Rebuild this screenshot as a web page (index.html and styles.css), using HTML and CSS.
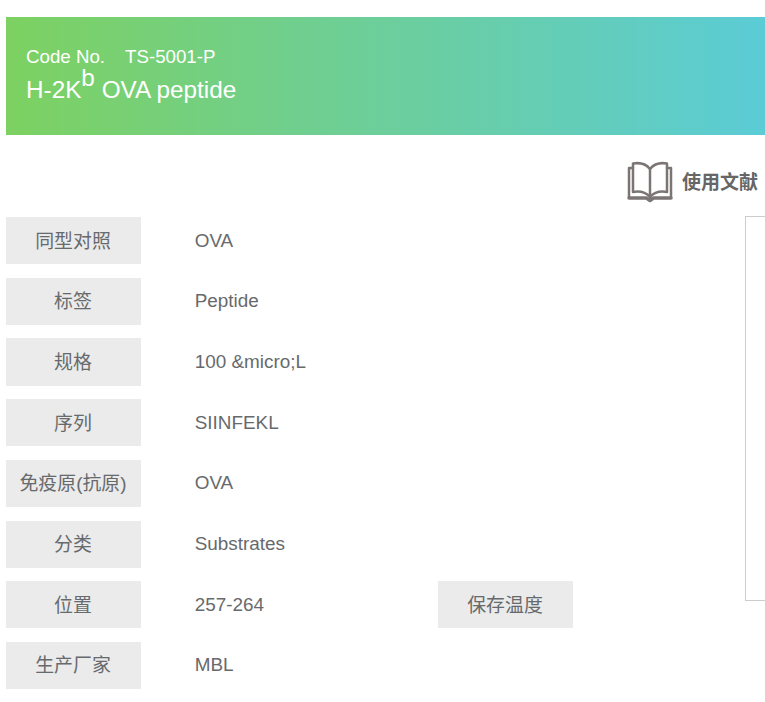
FILE: index.html
```html
<!DOCTYPE html>
<html lang="zh">
<head>
<meta charset="utf-8">
<title>H-2Kb OVA peptide</title>
<link rel="stylesheet" href="styles.css">
</head>
<body>
<header class="banner">
  <div class="code"><span class="code-label">Code No.</span><span>TS-5001-P</span></div>
  <h1 class="title">H-2K<sup class="sup">b</sup> OVA peptide</h1>
</header>
<div class="tools">
  <a class="doc-link" href="#">
    <svg class="book" width="46" height="42" viewBox="0 0 46 42" fill="none" stroke="#7b7674" stroke-linejoin="round" stroke-linecap="round">
      <path d="M23 8C19 3 12 1.500 6 2.500V31C12 30 19 31.500 23 36C27 31.500 34 30 40 31V2.500C34 1.500 27 3 23 8Z" stroke-width="2.500"/>
      <path d="M23 8V36" stroke-width="2.500"/>
      <path d="M6 7H2V36" stroke-width="2.500"/>
      <path d="M40 7H44V36" stroke-width="2.500"/>
      <path d="M2 37H19.500L23 39.500L26.500 37H44" stroke-width="3.500"/>
    </svg>
    <span class="doc-text">使用文献</span>
  </a>
</div>
<main class="content">
  <div class="specs">
    <div class="label">同型对照</div><div class="value wide">OVA</div>
    <div class="label">标签</div><div class="value wide">Peptide</div>
    <div class="label">规格</div><div class="value wide">100 &amp;micro;L</div>
    <div class="label">序列</div><div class="value wide">SIINFEKL</div>
    <div class="label">免疫原(抗原)</div><div class="value wide">OVA</div>
    <div class="label">分类</div><div class="value wide">Substrates</div>
    <div class="label">位置</div><div class="value">257-264</div><div class="label">保存温度</div><div class="value"></div>
    <div class="label">生产厂家</div><div class="value wide">MBL</div>
  </div>
  <aside class="panel"></aside>
</main>
</body>
</html>
```

FILE: styles.css
```css
html, body {
  margin: 0;
  padding: 0;
  background: #fff;
  overflow: hidden;
}

body {
  font-family: "Liberation Sans", "Noto Sans CJK SC", sans-serif;
  color: #676a6c;
  height: 702px;
}

.banner {
  margin: 17px 0 0 6px;
  height: 118px;
  padding: 29px 20px 0;
  box-sizing: border-box;
  background: linear-gradient(90deg, #7dd161, #5bccd6);
  color: #fff;
}

.code {
  font-size: 18.72px;
  line-height: 22px;
}

.code-label {
  margin-right: 20px;
}

.title {
  margin: 8px 0 0;
  font-size: 24.3px;
  font-weight: 400;
  line-height: 28px;
}

.sup {
  font-size: 24.3px;
  line-height: 0;
  vertical-align: 12px;
}

.tools {
  display: flex;
  justify-content: flex-end;
  height: 81px;
  padding: 26px 7px 0 0;
  box-sizing: border-box;
}

.doc-link {
  display: flex;
  align-items: center;
  align-self: flex-start;
  gap: 9px;
  color: #666;
  font-size: 19px;
  font-weight: 700;
  text-decoration: none;
}

.doc-text {
  padding-bottom: 3px;
}

.book {
  display: block;
}

.content {
  display: flex;
  margin-left: 6px;
}

.specs {
  display: grid;
  grid-template-columns: 135px 297px 135px 1fr;
  grid-auto-rows: 47.1px;
  row-gap: 13.62px;
  width: 739px;
  flex: none;
  margin-top: 1px;
  font-size: 18.9px;
}

.label {
  display: flex;
  align-items: center;
  justify-content: center;
  padding: 0 1px 3px 0;
  box-sizing: border-box;
  background: #ebebeb;
  white-space: nowrap;
}

.value {
  display: flex;
  align-items: center;
  padding-left: 53.7px;
}

.wide {
  grid-column: 2 / -1;
}

.panel {
  flex: 1;
  height: 383px;
  border: 1px solid #ccc;
  border-right: 0;
}
```
